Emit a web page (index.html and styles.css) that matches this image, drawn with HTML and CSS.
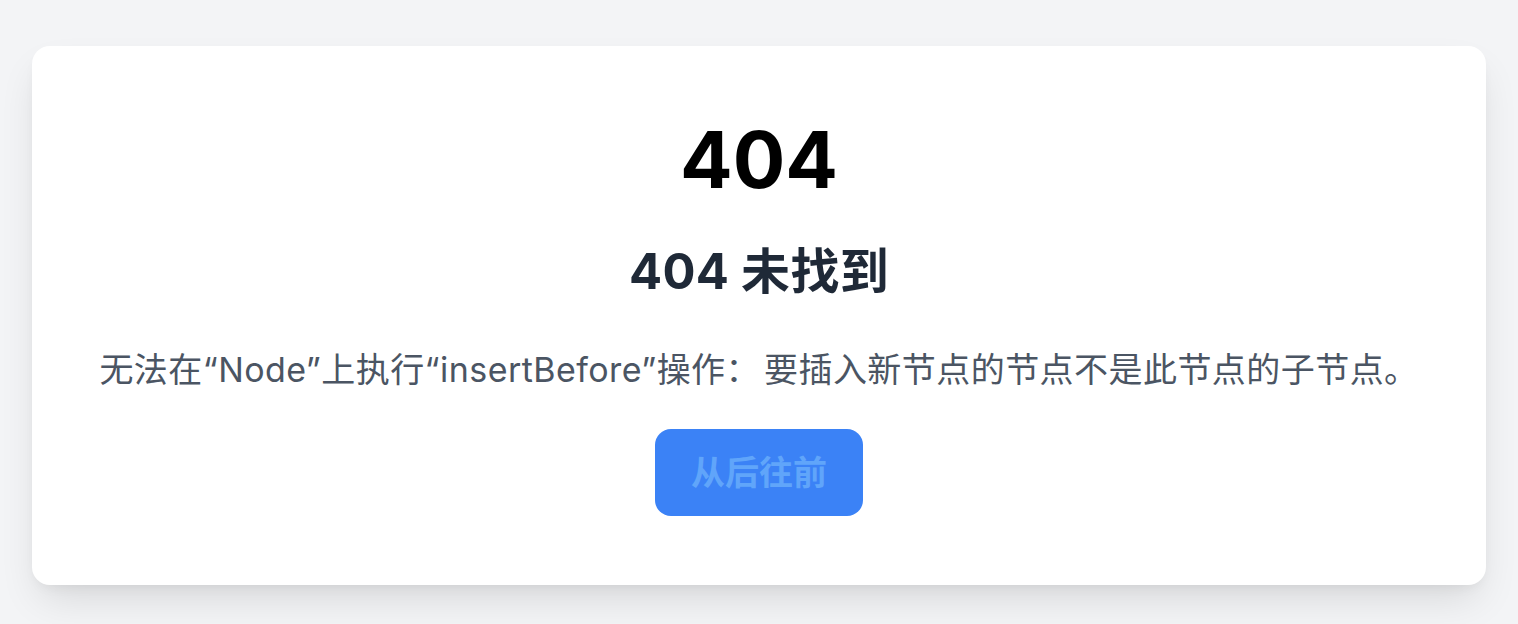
FILE: index.html
```html
<!DOCTYPE html>
<html lang="zh-CN">
<head>
<meta charset="utf-8">
<title>404 未找到</title>
<link rel="stylesheet" href="styles.css">
</head>
<body>
  <main class="page">
    <section class="card">
      <h1 class="code">404</h1>
      <h2 class="title">404 未找到</h2>
      <p class="message">无法在“Node”上执行“insertBefore”操作<span class="colon">：</span>要插入新节点的节点不是此节点的子节点。</p>
      <button class="back-btn" type="button">从后往前</button>
    </section>
  </main>
</body>
</html>
```

FILE: styles.css
```css
* {
  box-sizing: border-box;
}

html, body {
  margin: 0;
  padding: 0;
  background: #f3f4f6;
}

body {
  font-family: "Inter", "Noto Sans CJK SC", sans-serif;
}

.page {
  padding: 46px 32px;
}

.card {
  background: #ffffff;
  border-radius: 18px;
  box-shadow: 0 20px 40px -8px rgba(0, 0, 0, 0.12), 0 6px 14px -6px rgba(0, 0, 0, 0.08);
  padding: 75px 32px 69px;
  display: flex;
  flex-direction: column;
  align-items: center;
  text-align: center;
}

.code {
  margin: 0;
  font-size: 78px;
  line-height: 1;
  font-weight: 700;
  color: #000000;
}

.title {
  margin: 48px 0 0;
  font-size: 49px;
  line-height: 1;
  font-weight: 700;
  color: #1f2937;
  letter-spacing: 0.3px;
}

.message {
  margin: 57px 0 0;
  font-size: 34px;
  line-height: 1;
  font-weight: 400;
  color: #4b5563;
  letter-spacing: 0.45px;
}

.colon {
  margin-right: 4px;
}

.back-btn {
  margin-top: 42px;
  height: 87px;
  padding: 0 36px;
  border: none;
  border-radius: 16px;
  background: #3b82f6;
  color: #60a5fa;
  font-family: "Inter", "Noto Sans CJK SC", sans-serif;
  font-size: 34px;
  font-weight: 700;
  line-height: 1;
  cursor: pointer;
}
```
